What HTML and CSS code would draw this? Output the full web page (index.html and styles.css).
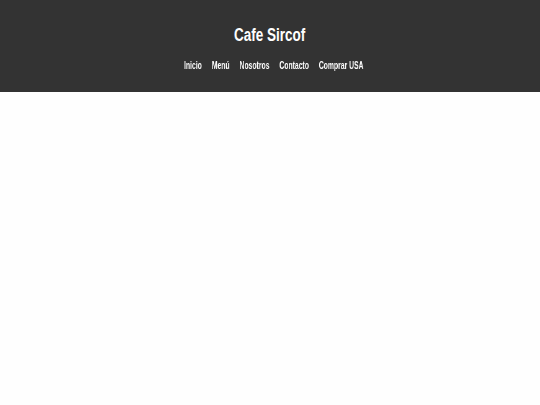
FILE: index.html
```html
<!DOCTYPE html>
<html lang="es">
<head>
<meta charset="utf-8">
<title>Cafe Sircof</title>
<link rel="stylesheet" href="styles.css">
</head>
<body>
<header class="site-header">
  <h1 class="brand">Cafe Sircof</h1>
  <nav class="main-nav">
    <a href="#">Inicio</a>
    <a href="#">Menú</a>
    <a href="#">Nosotros</a>
    <a href="#">Contacto</a>
    <a href="#">Comprar USA</a>
  </nav>
</header>
</body>
</html>
```
FILE: styles.css
```css
html, body {
  margin: 0;
  padding: 0;
  background: #fefefe;
}
body {
  font-family: "Liberation Sans", Arial, sans-serif;
  -webkit-font-smoothing: antialiased;
}
.site-header {
  background: #333333;
  height: 92px;
  box-sizing: border-box;
  padding-top: 24px;
  display: flex;
  flex-direction: column;
  align-items: center;
  box-shadow: 0 1px 3px rgba(0,0,0,0.35);
}
.brand {
  margin: 0;
  color: #ffffff;
  font-size: 18px;
  font-weight: bold;
  line-height: 22px;
  transform: scaleX(0.75);
}
.main-nav {
  margin-top: 12px;
  margin-left: 8px;
  display: flex;
  gap: 16px;
  transform: scaleX(0.62);
  will-change: transform;
}
.main-nav a {
  color: #ffffff;
  text-decoration: none;
  font-size: 11px;
  font-weight: bold;
  line-height: 14px;
}
```
